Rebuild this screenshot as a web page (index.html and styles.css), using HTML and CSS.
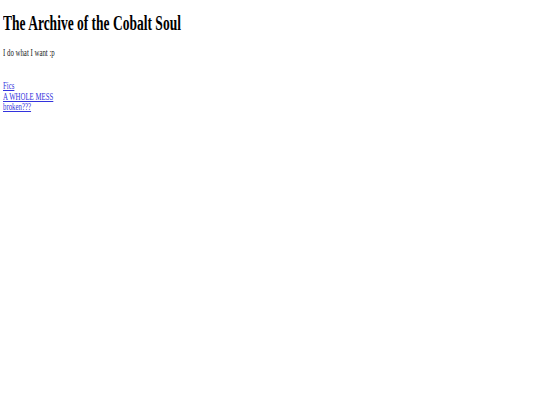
FILE: index.html
```html
<!DOCTYPE html>
<html>
<head>
<meta charset="utf-8">
<title>The Archive of the Cobalt Soul</title>
<link rel="stylesheet" href="styles.css">
</head>
<body>
<h1 class="title">The Archive of the Cobalt Soul</h1>
<p class="tagline">I do what I want :p</p>
<nav class="links">
<a href="#">Fics</a>
<a href="#">A WHOLE MESS</a>
<a href="#">broken???</a>
</nav>
</body>
</html>
```
FILE: styles.css
```css
html, body {
  margin: 0;
  padding: 0;
  background: #ffffff;
}
body {
  padding: 0 3px;
  font-family: "Liberation Serif", "Times New Roman", serif;
  color: #000000;
}
.title, .tagline, .links {
  transform-origin: 0 0;
}
.title {
  margin: 13px 0 0 0;
  font-size: 20px;
  line-height: 20px;
  font-weight: bold;
  transform: scaleX(0.675);
}
.tagline {
  margin: 14px 0 0 0;
  font-size: 10.5px;
  line-height: 12px;
  color: #222222;
  transform: scaleX(0.65);
}
.links {
  margin-top: 22px;
  font-size: 10.5px;
  line-height: 10.5px;
  display: flex;
  flex-direction: column;
  align-items: flex-start;
  transform: scaleX(0.65);
}
.links a {
  color: #3333dd;
  text-decoration: underline;
}
```
